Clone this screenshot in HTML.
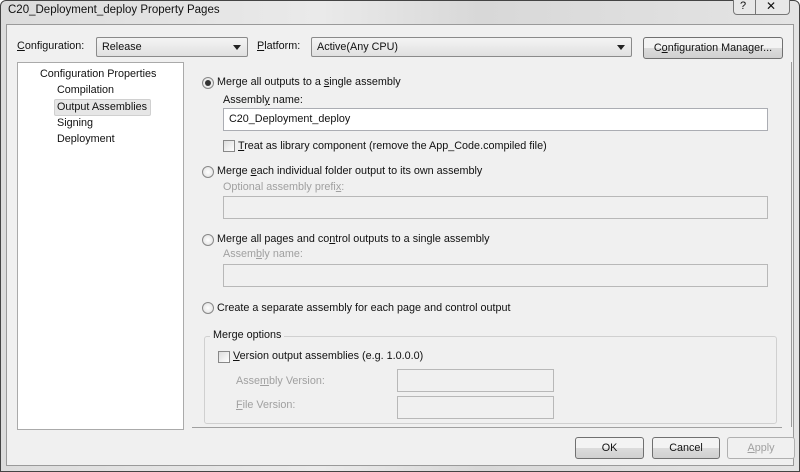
<!DOCTYPE html>
<html><head><meta charset="utf-8"><style>
*{box-sizing:border-box;margin:0;padding:0}
body{width:800px;height:472px;overflow:hidden;background:#fff;font-family:"Liberation Sans",sans-serif;font-size:10.8px;color:#111;position:relative}
.a{position:absolute;white-space:nowrap}
.win{position:absolute;left:0;top:0;width:800px;height:472px;background:linear-gradient(90deg,#dcdcdc,#eaeaea 40%,#d8d8d8 60%,#e4e4e4);border:1px solid #444;border-radius:6px 6px 0 0}
.client{position:absolute;left:6px;top:24px;width:788px;height:442px;background:#f0f0f0;border:1px solid #9a9a9a}
.combo{position:absolute;height:20px;border:1px solid #8a8a8a;border-radius:2px;background:linear-gradient(#f4f4f4,#e0e0e0);padding:3px 5px}
.combo:after{content:"";position:absolute;right:6px;top:7px;border-left:4px solid transparent;border-right:4px solid transparent;border-top:5px solid #222}
.btn{position:absolute;height:22px;border:1px solid #707070;border-radius:3px;background:linear-gradient(#f3f3f3 50%,#dcdcdc 50%,#d0d0d0);text-align:center;line-height:20px}
.tb{position:absolute;background:#fff;border:1px solid #abadb3;height:23px}
.tbd{position:absolute;background:#f0f0f0;border:1px solid #b8b8b8;height:23px}
.rad{position:absolute;width:12px;height:12px;border-radius:50%;border:1px solid #888;background:radial-gradient(#fff,#ddd)}
.rad.on:after{content:"";position:absolute;left:2px;top:2px;width:6px;height:6px;border-radius:50%;background:#333}
.chk{position:absolute;width:12px;height:12px;border:1px solid #888;background:linear-gradient(135deg,#ddd,#fff)}
.dis{color:#a0a0a0}
u{text-decoration:underline}
</style></head><body>
<div class="win"></div>
<div class="a" style="left:8px;top:4px;font-size:11.5px">C20_Deployment_deploy Property Pages</div>
<div class="a" style="left:733px;top:0;width:57px;height:15px;border:1px solid #777;border-top:none;border-radius:0 0 4px 4px;background:#e8e8e8"></div>
<div class="a" style="left:755px;top:0;width:1px;height:15px;background:#777"></div>
<div class="a" style="left:740px;top:0;font-size:11px">?</div>
<div class="a" style="left:766px;top:-1px;font-size:12px">✕</div>
<div class="client"></div>
<div class="a" style="left:17px;top:40px"><u>C</u>onfiguration:</div>
<div class="combo" style="left:96px;top:37px;width:152px">Release</div>
<div class="a" style="left:257px;top:40px"><u>P</u>latform:</div>
<div class="combo" style="left:311px;top:37px;width:321px">Active(Any CPU)</div>
<div class="btn" style="left:643px;top:37px;width:140px">C<u>o</u>nfiguration Manager...</div>
<div class="a" style="left:17px;top:62px;width:167px;height:368px;background:#fff;border:1px solid #aaa"></div>
<div class="a" style="left:40px;top:68px">Configuration Properties</div>
<div class="a" style="left:57px;top:84px">Compilation</div>
<div class="a" style="left:54px;top:99px;width:97px;height:17px;background:#e6e6e6;border:1px solid #d0d0d0;border-radius:2px"></div>
<div class="a" style="left:57px;top:101px">Output Assemblies</div>
<div class="a" style="left:57px;top:117px">Signing</div>
<div class="a" style="left:57px;top:133px">Deployment</div>
<div class="a" style="left:791px;top:62px;width:1px;height:365px;background:#999"></div>
<div class="rad on" style="left:202px;top:77px"></div>
<div class="a" style="left:217px;top:76px">Merge all outputs to a <u>s</u>ingle assembly</div>
<div class="a" style="left:223px;top:94px">Assembl<u>y</u> name:</div>
<div class="tb" style="left:223px;top:108px;width:545px;padding:4px 5px">C20_Deployment_deploy</div>
<div class="chk" style="left:223px;top:140px"></div>
<div class="a" style="left:238px;top:140px"><u>T</u>reat as library component (remove the App_Code.compiled file)</div>
<div class="rad" style="left:202px;top:166px"></div>
<div class="a" style="left:217px;top:165px">Merge <u>e</u>ach individual folder output to its own assembly</div>
<div class="a dis" style="left:223px;top:181px">Optional assembly prefi<u>x</u>:</div>
<div class="tbd" style="left:223px;top:196px;width:545px"></div>
<div class="rad" style="left:202px;top:234px"></div>
<div class="a" style="left:217px;top:233px">Merge all pages and co<u>n</u>trol outputs to a single assembly</div>
<div class="a dis" style="left:223px;top:248px">Assem<u>b</u>ly name:</div>
<div class="tbd" style="left:223px;top:264px;width:545px"></div>
<div class="rad" style="left:202px;top:302px"></div>
<div class="a" style="left:217px;top:302px">Create a separate assembly for each page and control output</div>
<div class="a" style="left:204px;top:336px;width:573px;height:88px;border:1px solid #d0d0d0;border-radius:3px"></div>
<div class="a" style="left:210px;top:329px;background:#f0f0f0;padding:0 3px">Merge options</div>
<div class="chk" style="left:218px;top:351px"></div>
<div class="a" style="left:233px;top:350px"><u>V</u>ersion output assemblies (e.g. 1.0.0.0)</div>
<div class="a dis" style="left:236px;top:375px">Asse<u>m</u>bly Version:</div>
<div class="tbd" style="left:397px;top:369px;width:157px"></div>
<div class="a dis" style="left:236px;top:399px"><u>F</u>ile Version:</div>
<div class="tbd" style="left:397px;top:396px;width:157px"></div>
<div class="a" style="left:192px;top:427px;width:590px;height:1px;background:#a0a0a0"></div>
<div class="btn" style="left:575px;top:437px;width:69px">OK</div>
<div class="btn" style="left:652px;top:437px;width:68px">Cancel</div>
<div class="btn dis" style="left:727px;top:437px;width:68px;border-color:#b0b0b0;background:#f0f0f0"><u>A</u>pply</div>
</body></html>
